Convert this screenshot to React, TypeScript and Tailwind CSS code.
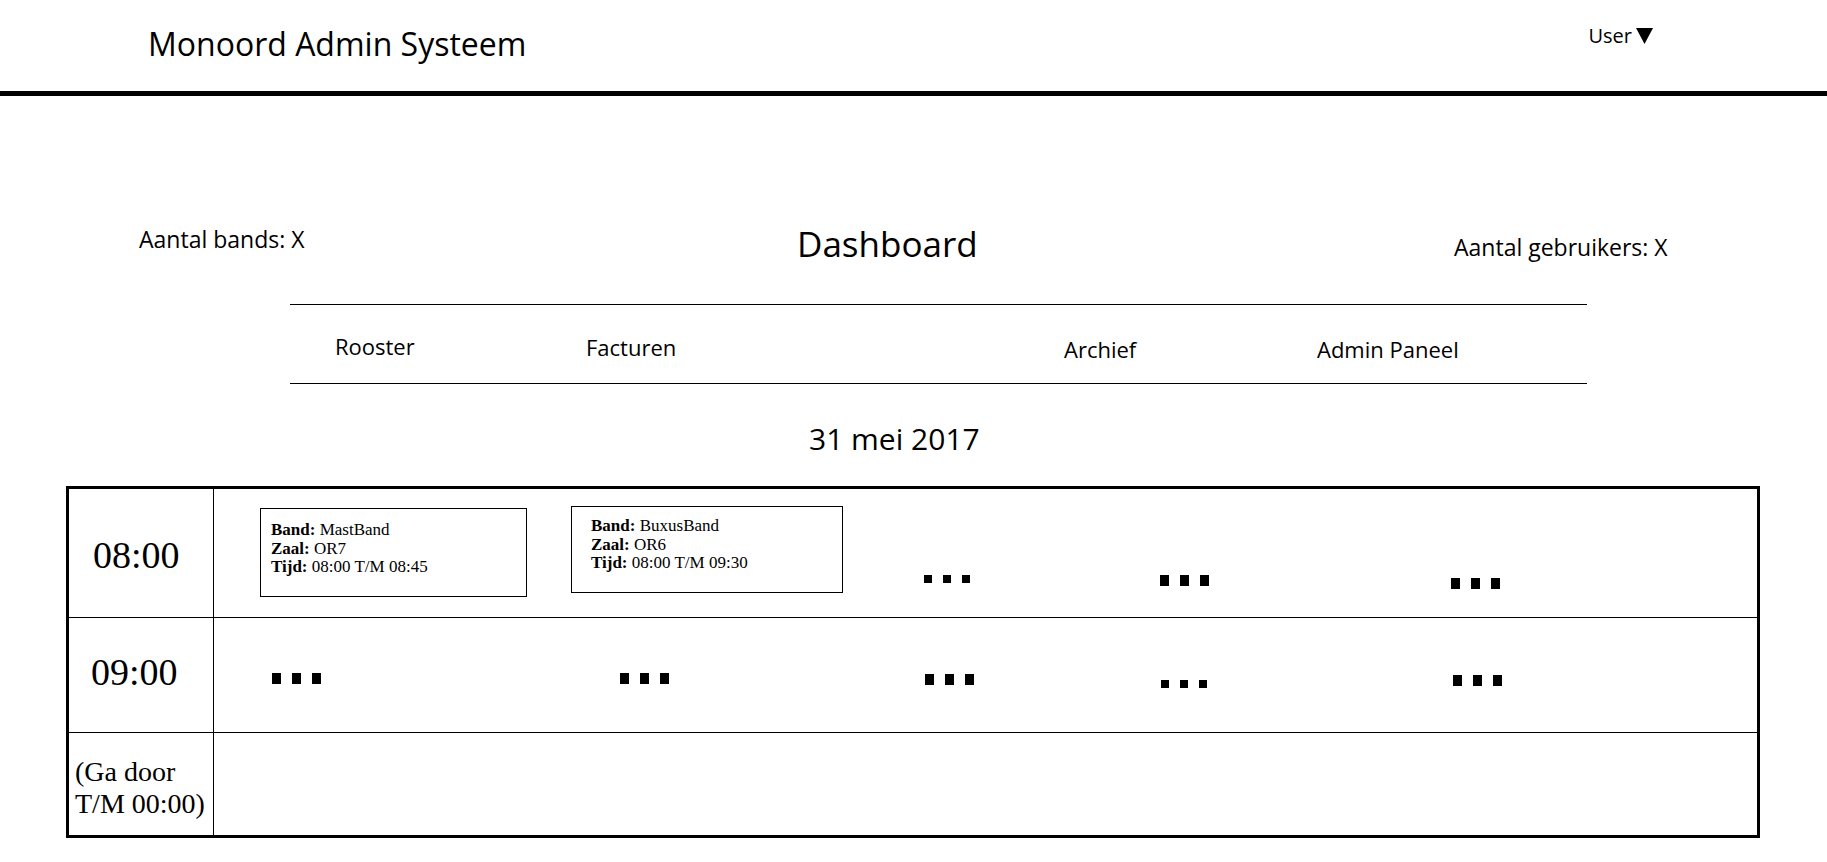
import { Fragment } from "react";

const sans = "font-['Open_Sans',sans-serif]";
const serif = "font-['Liberation_Serif',serif]";

function Dots({ className = "", big = true }: { className?: string; big?: boolean }) {
  const block = big ? "w-[9px] h-[11px]" : "w-[8px] h-[8px]";
  return (
    <div className={`flex shrink-0 gap-[11px] ${className}`}>
      <span className={`${block} bg-black`} />
      <span className={`${block} bg-black`} />
      <span className={`${block} bg-black`} />
    </div>
  );
}

interface Booking {
  band: string;
  zaal: string;
  tijd: string;
}

function BookingCard({ booking, className = "" }: { booking: Booking; className?: string }) {
  return (
    <div className={`shrink-0 border border-black text-[17px] leading-[18.5px] text-black ${serif} ${className}`}>
      <div><b>Band:</b> {booking.band}</div>
      <div><b>Zaal:</b> {booking.zaal}</div>
      <div><b>Tijd:</b> {booking.tijd}</div>
    </div>
  );
}

export default function App() {
  const navItems = [
    { label: "Rooster", cls: "w-[251px] pt-[30px]" },
    { label: "Facturen", cls: "w-[478px] pt-[31px]" },
    { label: "Archief", cls: "w-[253px] pt-[33px]" },
    { label: "Admin Paneel", cls: "pt-[33px]" },
  ];

  return (
    <div className="min-h-[862px] w-full bg-white text-black">
      {/* top bar */}
      <header className="flex h-[96px] border-b-[5px] border-black">
        <h1 className={`ml-[148px] pt-[28px] text-[32px] leading-none font-normal ${sans}`}>
          Monoord Admin Systeem
        </h1>
        <div className={`ml-auto mr-[174px] flex items-start pt-[26px] text-[20px] leading-none ${sans}`}>
          <span>User</span>
          <svg width="17" height="16" viewBox="0 0 17 16" className="ml-[4px] mt-[2px]">
            <polygon points="0,0 17,0 8.5,16" fill="black" />
          </svg>
        </div>
      </header>

      {/* stats + title */}
      <section className={`grid grid-cols-[797px_657px_1fr] items-start ${sans}`}>
        <div className="pl-[139px] pt-[132px] text-[23px] leading-none">Aantal bands: X</div>
        <div className="pt-[130px] text-[35px] leading-none">Dashboard</div>
        <div className="pt-[140px] text-[23px] leading-none">Aantal gebruikers: X</div>
      </section>

      {/* nav */}
      <nav className={`ml-[290px] mt-[43px] flex h-[80px] w-[1297px] border-y border-black pl-[45px] text-[22px] leading-none ${sans}`}>
        {navItems.map((n) => (
          <div key={n.label} className={n.cls}>
            {n.label}
          </div>
        ))}
      </nav>

      <div className={`mt-[40px] pl-[809px] text-[30px] leading-none ${sans}`}>31 mei 2017</div>

      {/* rooster table */}
      <div className={`ml-[66px] mt-[32px] w-[1694px] border-[3px] border-black ${serif}`}>
        <div className="flex h-[129px] border-b border-black">
          <div className="w-[145px] shrink-0 border-r border-black pl-[24px] pt-[47px] text-[38px] leading-none">
            08:00
          </div>
          <div className="flex items-start">
            <BookingCard
              className="ml-[46px] mt-[19px] h-[89px] w-[267px] pl-[10px] pt-[12px]"
              booking={{ band: "MastBand", zaal: "OR7", tijd: "08:00 T/M 08:45" }}
            />
            <BookingCard
              className="ml-[44px] mt-[17px] h-[87px] w-[272px] pl-[19px] pt-[10px]"
              booking={{ band: "BuxusBand", zaal: "OR6", tijd: "08:00 T/M 09:30" }}
            />
            <Dots big={false} className="ml-[81px] mt-[86px]" />
            <Dots className="ml-[190px] mt-[86px]" />
            <Dots className="ml-[242px] mt-[89px]" />
          </div>
        </div>

        <div className="flex h-[115px] border-b border-black">
          <div className="w-[145px] shrink-0 border-r border-black pl-[22px] pt-[35px] text-[38px] leading-none">
            09:00
          </div>
          <div className="flex items-start">
            <Dots className="ml-[58px] mt-[55px]" />
            <Dots className="ml-[299px] mt-[55px]" />
            <Dots className="ml-[256px] mt-[56px]" />
            <Dots big={false} className="ml-[187px] mt-[62px]" />
            <Dots className="ml-[246px] mt-[57px]" />
          </div>
        </div>

        <div className="flex h-[102px]">
          <div className="w-[145px] shrink-0 border-r border-black pl-[6px] pt-[23px] text-[28px] leading-[32px]">
            {["(Ga door", "T/M 00:00)"].map((l) => (
              <Fragment key={l}>
                <span className="whitespace-nowrap">{l}</span>
                <br />
              </Fragment>
            ))}
          </div>
          <div />
        </div>
      </div>
    </div>
  );
}
